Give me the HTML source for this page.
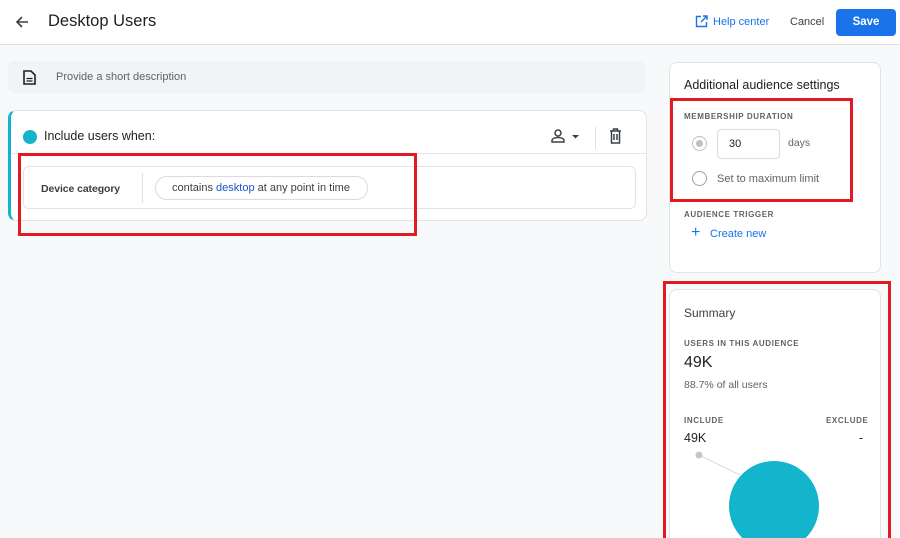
<!DOCTYPE html>
<html style="overflow:hidden;height:538px"><head><style>
*{box-sizing:border-box;margin:0;padding:0}
body{width:900px;height:538px;overflow:hidden;background:#f8f9fa;font-family:"Liberation Sans",Arial,sans-serif;color:#202124;position:relative}
.a{position:absolute}
.hdr{left:0;top:0;width:900px;height:45px;background:#fff;border-bottom:1px solid #e0e0e0}
.card{background:#fff;border:1px solid #e3e3e3;border-radius:8px}
.lbl{font-size:8px;letter-spacing:.6px;color:#5f6368;font-weight:bold}
.red{border:3px solid #e21b23}
</style></head><body>
<div class="a hdr"></div>
<svg class="a" style="left:14px;top:14px" width="16" height="16" viewBox="0 0 16 16"><path d="M14 8H3M8 3L3 8l5 5" stroke="#3c4043" stroke-width="1.6" fill="none"/></svg>
<div class="a" style="left:48px;top:12px;font-size:16.5px">Desktop Users</div>
<svg class="a" style="left:695px;top:15px" width="13" height="13" viewBox="0 0 13 13"><path d="M6 1.5H1.5v10h10V7M8 1h4v4M12 1L6 7" stroke="#1a73e8" stroke-width="1.4" fill="none"/></svg>
<div class="a" style="left:713px;top:16px;font-size:11px;color:#1a73e8">Help center</div>
<div class="a" style="left:790px;top:16px;font-size:11px;color:#3c4043">Cancel</div>
<div class="a" style="left:836px;top:9px;width:60px;height:27px;background:#1a73e8;border-radius:4px;color:#fff;font-size:11.5px;font-weight:bold;text-align:center;line-height:27px">Save</div>

<div class="a" style="left:8px;top:61px;width:638px;height:32px;background:#f1f3f4;border-radius:6px"></div>
<svg class="a" style="left:23px;top:70px" width="13" height="15" viewBox="0 0 13 15"><path d="M1 1h7l4 4v9H1z" stroke="#202124" stroke-width="1.6" fill="none"/><path d="M3.5 8.5h6M3.5 11h6" stroke="#202124" stroke-width="1.3"/></svg>
<div class="a" style="left:56px;top:71px;font-size:11px;color:#5f6368">Provide a short description</div>

<div class="a card" style="left:8px;top:110px;width:639px;height:111px;border-left:3px solid #12b5cb"></div>
<div class="a" style="left:11px;top:153px;width:635px;height:1px;background:#e8e8e8"></div>
<div class="a" style="left:23px;top:130px;width:14px;height:14px;border-radius:50%;background:#12b5cb"></div>
<div class="a" style="left:44px;top:129px;font-size:12.5px">Include users when:</div>
<svg class="a" style="left:550px;top:128px" width="32" height="16" viewBox="0 0 32 16"><circle cx="8" cy="5" r="3" stroke="#3c4043" stroke-width="1.5" fill="none"/><path d="M2 14v-1.5c0-2 3-3 6-3s6 1 6 3V14z" stroke="#3c4043" stroke-width="1.5" fill="none"/><path d="M22 7h7l-3.5 3.5z" fill="#3c4043"/></svg>
<div class="a" style="left:595px;top:127px;width:1px;height:22px;background:#e0e0e0"></div>
<svg class="a" style="left:609px;top:128px" width="13" height="16" viewBox="0 0 13 16"><path d="M1 3h11M4.5 3V1h4v2M2.5 3v12h8V3M5 6v6M8 6v6" stroke="#3c4043" stroke-width="1.5" fill="none"/></svg>
<div class="a card" style="left:23px;top:166px;width:613px;height:43px;border-radius:6px"></div>
<div class="a" style="left:41px;top:183px;font-size:10.5px;font-weight:bold;color:#3c4043;letter-spacing:-0.1px">Device category</div>
<div class="a" style="left:142px;top:173px;width:1px;height:30px;background:#e0e0e0"></div>
<div class="a" style="left:155px;top:176px;width:213px;height:24px;border:1px solid #dadce0;border-radius:12px;font-size:11px;color:#3c4043;line-height:22px;padding-left:16px;white-space:nowrap">contains <span style="color:#1a56c8">desktop</span> at any point in time</div>
<div class="a red" style="left:18px;top:153px;width:399px;height:83px"></div>

<div class="a card" style="left:669px;top:62px;width:212px;height:211px"></div>
<div class="a" style="left:684px;top:78px;font-size:12.5px">Additional audience settings</div>
<div class="a lbl" style="left:684px;top:112px">MEMBERSHIP DURATION</div>
<div class="a" style="left:692px;top:136px;width:15px;height:15px;border-radius:50%;border:1.5px solid #bdc1c6"></div>
<div class="a" style="left:696px;top:140px;width:7px;height:7px;border-radius:50%;background:#bdc1c6"></div>
<div class="a" style="left:717px;top:129px;width:63px;height:30px;border:1px solid #dadce0;border-radius:4px;font-size:11px;line-height:28px;padding-left:11px">30</div>
<div class="a" style="left:788px;top:137px;font-size:10.5px;color:#5f6368">days</div>
<div class="a" style="left:692px;top:171px;width:15px;height:15px;border-radius:50%;border:1.5px solid #9aa0a6"></div>
<div class="a" style="left:717px;top:173px;font-size:11px;color:#5f6368">Set to maximum limit</div>
<div class="a red" style="left:670px;top:98px;width:183px;height:104px"></div>
<div class="a lbl" style="left:684px;top:210px">AUDIENCE TRIGGER</div>
<div class="a" style="left:691px;top:224px;font-size:16px;color:#1a73e8;font-weight:300">+</div>
<div class="a" style="left:710px;top:228px;font-size:11px;color:#1a73e8">Create new</div>

<div class="a card" style="left:669px;top:289px;width:212px;height:260px"></div>
<div class="a" style="left:684px;top:306px;font-size:12px;color:#3c4043">Summary</div>
<div class="a lbl" style="left:684px;top:339px">USERS IN THIS AUDIENCE</div>
<div class="a" style="left:684px;top:354px;font-size:16px">49K</div>
<div class="a" style="left:684px;top:379px;font-size:10.5px;color:#5f6368">88.7% of all users</div>
<div class="a lbl" style="left:684px;top:416px">INCLUDE</div>
<div class="a lbl" style="left:826px;top:416px">EXCLUDE</div>
<div class="a" style="left:684px;top:431px;font-size:12.5px">49K</div>
<div class="a" style="left:859px;top:431px;font-size:12.5px">-</div>
<svg class="a" style="left:690px;top:450px" width="60" height="30"><line x1="9" y1="5" x2="50" y2="25" stroke="#dadce0" stroke-width="1"/><circle cx="9" cy="5" r="3.5" fill="#c4c7c5"/></svg>
<div class="a" style="left:729px;top:461px;width:90px;height:90px;border-radius:50%;background:#12b5cb"></div>
<div class="a red" style="left:663px;top:281px;width:228px;height:270px"></div>
</body></html>
